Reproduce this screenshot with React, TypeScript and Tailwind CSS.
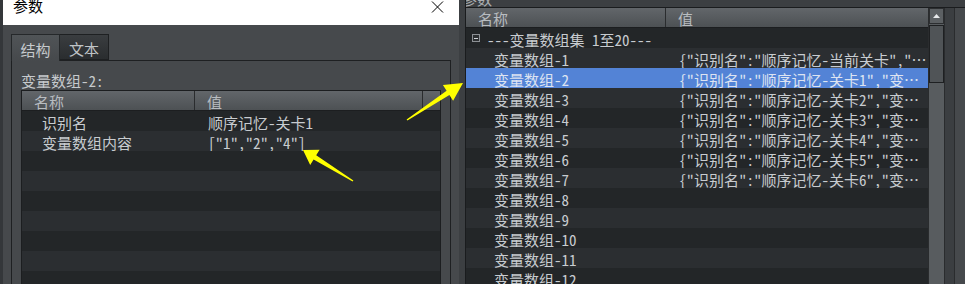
import React from "react";

const F = "font-['Noto_Sans_Mono_CJK_SC','Noto_Sans_CJK_SC',monospace]";

const leftRows: [string, string][] = [
  ["识别名", "顺序记忆-关卡1"],
  ["变量数组内容", '["1","2","4"]'],
  ["", ""],
  ["", ""],
  ["", ""],
  ["", ""],
  ["", ""],
  ["", ""],
  ["", ""],
];

const rightRows: [string, string][] = [
  ["变量数组-1", '{"识别名":"顺序记忆-当前关卡","…'],
  ["变量数组-2", '{"识别名":"顺序记忆-关卡1","变…'],
  ["变量数组-3", '{"识别名":"顺序记忆-关卡2","变…'],
  ["变量数组-4", '{"识别名":"顺序记忆-关卡3","变…'],
  ["变量数组-5", '{"识别名":"顺序记忆-关卡4","变…'],
  ["变量数组-6", '{"识别名":"顺序记忆-关卡5","变…'],
  ["变量数组-7", '{"识别名":"顺序记忆-关卡6","变…'],
  ["变量数组-8", ""],
  ["变量数组-9", ""],
  ["变量数组-10", ""],
  ["变量数组-11", ""],
  ["变量数组-12", ""],
];

const LeftDialog = () => {
  return (
    <div className="flex w-[456px] shrink-0 flex-col">
      <div className="flex h-[25px] shrink-0 items-start justify-between bg-white pl-[10px] pr-[15px]">
        <span className="-mt-[3px] text-[15px] leading-[18px] text-black">参数</span>
        <svg width="13" height="12" viewBox="0 0 13 12" className="mt-[1px]">
          <path d="M1 0.5L12 11.5M12 0.5L1 11.5" stroke="#000" strokeWidth="1" fill="none" />
        </svg>
      </div>
      <div className="flex flex-1 flex-col bg-[#46494c] px-[8px] pt-[9px]">
        <div className="relative z-10 flex h-[26px] items-start">
          <div className="flex h-[27px] w-[49px] items-center justify-center border border-b-0 border-[#25282a] bg-gradient-to-b from-[#505457] to-[#46494c] pt-[2px] text-[#c6cacd]">
            结构
          </div>
          <div className="flex h-[26px] w-[49px] items-center justify-center border border-l-0 border-[#1e2022] bg-gradient-to-b from-[#3a3d40] to-[#2a2d2f] pt-[2px] text-[#c0c4c7]">
            文本
          </div>
        </div>
        <div className="flex flex-1 flex-col border border-b-0 border-[#1e2022] bg-[#46494c] px-[9px] pt-[12px]">
          <span className="text-[15px] leading-[15px] text-[#c6cacd]">变量数组-2:</span>
          <div className="mt-[2px] flex flex-1 flex-col border border-b-0 border-[#1c1e20] bg-[#232628]">
            <div className="flex h-[20px] border-b border-[#1c1e20] bg-gradient-to-b from-[#62666a] to-[#4d5154] text-[#b8bcc0]">
              <div className="flex w-[173px] items-center border-r border-[#2a2c2e] pl-[12px] pt-[1px]">名称</div>
              <div className="flex w-[228px] items-center border-r border-[#2a2c2e] pl-[12px] pt-[1px]">值</div>
              <div className="flex-1" />
            </div>
            {leftRows.map((r, i) => (
              <div
                key={i}
                className={`flex h-[20px] shrink-0 text-[#c8ccd0] ${i % 2 === 0 ? "bg-[#232628]" : "bg-[#2b2e31]"}`}
              >
                <div className="flex w-[174px] items-center pl-[20px] pt-[3px]">{r[0]}</div>
                <div className="flex flex-1 items-center pl-[12px] pt-[3px]">{r[1]}</div>
              </div>
            ))}
          </div>
        </div>
      </div>
    </div>
  );
};

const RightPanel = () => {
  return (
    <div className="flex w-[500px] shrink-0 flex-col border-l border-[#1a1c1e] bg-[#3c3f42]">
      <div className="h-[7px] shrink-0 overflow-hidden">
        <span className="-mt-[9px] ml-[-4px] block text-[15px] leading-[15px] text-[#a9adb1]">参数</span>
      </div>
      <div className="flex flex-1 border-t border-[#1a1c1e]">
        <div className="flex w-[462px] flex-col bg-[#232628]">
          <div className="flex h-[20px] shrink-0 border-b border-[#1c1e20] bg-gradient-to-b from-[#62666a] to-[#4d5154] text-[#b8bcc0]">
            <div className="flex w-[200px] items-center border-r border-[#2a2c2e] pl-[12px] pt-[1px]">名称</div>
            <div className="flex flex-1 items-center pl-[12px] pt-[1px]">值</div>
          </div>
          <div className="flex h-[20px] shrink-0 items-center bg-[#232628] pl-[6px] pt-[3px] text-[#c8ccd0]">
            <span className="-mt-[3px] mr-[7px] flex h-[8px] w-[8px] items-center justify-center border border-[#8c9094] bg-[#2c2f31]">
              <span className="h-px w-[4px] bg-[#d0d4d8]" />
            </span>
            <span className="whitespace-pre">---变量数组集 1至20---</span>
          </div>
          {rightRows.map((r, i) => {
            const sel = i === 1;
            return (
              <div
                key={i}
                className={`flex h-[20px] shrink-0 whitespace-pre ${
                  sel ? "bg-[#5383d6] text-[#dde4f2]" : i % 2 === 0 ? "bg-[#2b2e31] text-[#c8ccd0]" : "bg-[#232628] text-[#c8ccd0]"
                }`}
              >
                <div className="flex w-[200px] items-center pl-[28px] pt-[3px]">{r[0]}</div>
                <div className="flex flex-1 items-center pl-[13px] pt-[3px]">{r[1]}</div>
              </div>
            );
          })}
        </div>
        <div className="flex w-[17px] flex-col border-x border-[#2a2c2e] bg-[#585c5f]">
          <div className="flex h-[16px] items-center justify-center border border-[#2c2e30] bg-[#5c6063]">
            <svg width="7" height="4" viewBox="0 0 7 4">
              <path d="M0 4L3.5 0L7 4Z" fill="#e8eaec" />
            </svg>
          </div>
          <div className="mt-[1px] h-[58px] border border-[#1e2022] bg-[#505457]" />
        </div>
        <div className="w-[10px] border-r border-[#2a2c2e] bg-[#3b3e41]" />
        <div className="flex-1 bg-[#46494c]" />
      </div>
    </div>
  );
};

const Arrows = () => {
  return (
    <svg className="pointer-events-none absolute left-0 top-0" width="965" height="284" viewBox="0 0 965 284">
      <polygon
        points="406.6,119.4 446.6,90.8 442.9,85.1 463,83 453.1,100.7 449.4,95 407.4,120.6"
        fill="#ffff00"
      />
      <polygon
        points="353.4,180.4 316.2,155.3 319.6,149.8 303,150 310.2,165.1 313.6,159.5 352.6,181.6"
        fill="#ffff00"
      />
    </svg>
  );
};

const App = () => {
  return (
    <div className={`relative flex h-[284px] w-[965px] overflow-hidden bg-[#3b3e41] text-[15px] leading-none ${F}`}>
      <div className="w-[3px] shrink-0 bg-[#34373a]" />
      <LeftDialog />
      <div className="w-[6px] shrink-0 bg-[#3c3f42]" />
      <RightPanel />
      <Arrows />
    </div>
  );
};

export default App;
